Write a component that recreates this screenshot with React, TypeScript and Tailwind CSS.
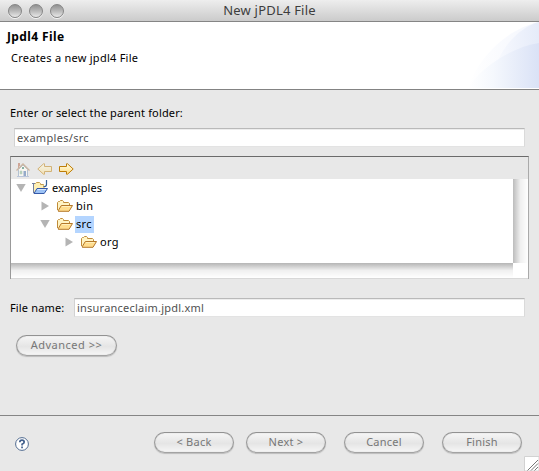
import type { ReactNode } from "react";

function TrafficLight() {
  return (
    <span className="size-[14px] rounded-full border border-[#858585] bg-linear-to-b from-[#929292] via-[#b9b9b9] to-[#e9e9e9] shadow-[0_1px_0_#f3f3f3]" />
  );
}

function HomeIcon() {
  return (
    <svg width="14" height="15" viewBox="0 0 14 15" opacity="0.7">
      <path d="M2.500 7.500 7 3l4.500 4.500v7h-9z" fill="#fffdf4" stroke="#9fb3c9" />
      <path d="M2.500 1v5M3.500 1v3" stroke="#c58a74" />
      <path d="M.5 8.500 7 2l6.500 6.500" fill="none" stroke="#c2a183" strokeWidth="1.300" />
      <path d="M1 14.500h12" stroke="#a7b9d6" />
      <path d="M6 5h2v2H6z" fill="#5d9a89" />
      <path d="M4 9h2v3H4z" fill="#a5cba0" stroke="#9bbdb9" strokeWidth=".5" />
      <path d="M7.500 9h2.500v5H7.500z" fill="#7390bd" />
    </svg>
  );
}

function ArrowIcon({ forward = false }: { forward?: boolean }) {
  return (
    <svg width="15" height="13" viewBox="0 0 15 13" className={forward ? "" : "-scale-x-100 opacity-50"}>
      <defs>
        <linearGradient id={forward ? "fwd" : "back"} x2="0" y2="1">
          <stop stopColor="#fffde8" />
          <stop offset="1" stopColor="#ffdc80" />
        </linearGradient>
      </defs>
      <path
        d="M.5 3.500h7V.8h1L14.200 6l-5.700 5.200h-1V8.500h-7z"
        fill={forward ? "url(#fwd)" : "url(#back)"}
        stroke="#bd7d08"
        strokeLinejoin="round"
      />
    </svg>
  );
}

function FolderIcon() {
  return (
    <svg width="16" height="12" viewBox="0 0 16 12">
      <path d="M.5 10V2.500l1-1h1l1-1h2l1 1v1h5l1 1V6" fill="#fff4c4" stroke="#c08b38" />
      <path d="M1 11 4.300 5.500h11.200L12 11.300H1.300z" fill="#ffdd8e" stroke="#b5782a" strokeLinejoin="round" />
      <path d="M5 6.500h8.500" stroke="#fff0bd" />
    </svg>
  );
}

function ProjectIcon() {
  return (
    <svg width="16" height="15" viewBox="0 0 16 15">
      <path d="M1.500 12.500V4.500l1-1h1l1-1h3l1 1v1h3l.5.5v4" fill="#fff0b4" stroke="#c39a4c" />
      <path d="M0 3.500h3M1.500 4v9" stroke="#747f9c" />
      <path d="M2 13.500 5 8.500h10.500l-3.300 5z" fill="#9cc2f5" stroke="#3559a8" strokeLinejoin="round" />
      <path d="M5.500 9.500h8.500" stroke="#d5e8ff" />
      <path d="M12 0h4v7h-4z" fill="#fff" opacity=".85" />
      <path d="M14.500 0v4.500q0 2-2 2h-1" fill="none" stroke="#386296" strokeWidth="1.200" />
    </svg>
  );
}

function Disclosure({ open = false }: { open?: boolean }) {
  return (
    <svg width="10" height="10" viewBox="0 0 10 10" className="shrink-0">
      <path d={open ? "M.3 1h9.400L5 9z" : "M1.500.5v9L9 5z"} fill="#b4b4b4" />
    </svg>
  );
}

function TreeRow({ inset, open, selected, children }: { inset: string; open?: boolean; selected?: boolean; children: ReactNode }) {
  return (
    <div className={`flex h-[18px] items-center ${inset}`}>
      <Disclosure open={open} />
      <span className="ml-[7px] flex w-[16px] shrink-0"><FolderIcon /></span>
      <span className={`ml-[2px] flex h-[17px] items-center pl-px tracking-[0.35px] ${selected ? "w-[19px] bg-[#b4d5ff]" : ""}`}>{children}</span>
    </div>
  );
}

function Field({ children, className }: { children: ReactNode; className: string }) {
  return (
    <div className={`flex h-[19px] items-center border border-t-[#b9b9b9] border-r-[#dadada] border-b-[#e3e3e3] border-l-[#d2d2d2] bg-white pl-[2px] text-[#505050] shadow-[inset_0_1px_0_#ededed] ${className}`}>
      {children}
    </div>
  );
}

function PillButton({ children, className }: { children: ReactNode; className: string }) {
  return (
    <button className={`flex h-[21px] items-center justify-center rounded-full border border-t-[#929292] border-r-[#989898] border-b-[#a3a3a3] border-l-[#989898] bg-linear-to-b from-[#f6f6f6] via-[#e5e5e5] via-55% to-[#f6f6f6] pb-px text-[#777] shadow-[0_1px_1px_#bcbcbc,inset_0_0_1px_#aaa] ${className}`}>
      {children}
    </button>
  );
}

export default function App() {
  return (
    <main className="flex h-[471px] w-[539px] flex-col overflow-hidden bg-[#e8e8e8] font-['Noto_Sans','Open_Sans',sans-serif] text-[11px] leading-[16px] whitespace-pre text-black">
      <header className="grid h-[22px] shrink-0 grid-cols-[1fr_auto_1fr] items-center border-b border-[#858585] bg-linear-to-b from-[#eeeeee] to-[#cbcbcb]">
        <div className="flex gap-[7px] pl-[8px]"><TrafficLight /><TrafficLight /><TrafficLight /></div>
        <h1 className="pb-px text-[13px] leading-[20px] tracking-[0.2px] text-[#3d3d3d]">New jPDL4 File</h1>
      </header>

      <section className="flex h-[68px] shrink-0 justify-between border-b border-[#838383] bg-white">
        <div className="pt-[6px]">
          <h2 className="pl-[7px] text-[12px] leading-[17px] font-bold tracking-[0.4px]">Jpdl4 File</h2>
          <p className="pt-[5px] pl-[11px] leading-[16px] tracking-[0.25px]">Creates a new jpdl4 File</p>
        </div>
        <svg width="74" height="67" viewBox="0 0 74 67">
          <defs>
            <linearGradient id="wash"><stop stopColor="#fff" /><stop offset="0.35" stopColor="#f5f8fd" /><stop offset="1" stopColor="#dae2f6" /></linearGradient>
            <linearGradient id="outer"><stop stopColor="#fff" /><stop offset="1" stopColor="#f3f6fd" /></linearGradient>
            <linearGradient id="inner"><stop stopColor="#f7f9fe" /><stop offset="1" stopColor="#e5ebf9" /></linearGradient>
          </defs>
          <path d="M3 66C12 37 41 7 74 0v66z" fill="url(#outer)" />
          <path d="M33 38C43 17 59 4 74 0v66H33z" fill="url(#inner)" />
          <path d="M3 66C14 47 46 25 74 21v45z" fill="url(#wash)" />
        </svg>
      </section>

      <section className="flex h-[326px] shrink-0 flex-col border-b border-[#858585] pt-[15px] pl-[10px]">
        <label className="leading-[16px] tracking-[0.15px]">Enter or select the parent folder:</label>
        <Field className="mt-[7px] ml-[4px] w-[511px] tracking-[0.3px]">examples/src</Field>

        <div className="mt-[9px] flex h-[123px] w-[519px] shrink-0 flex-col border-t border-r border-l border-t-[#6b6b6b] border-r-[#aaa] border-l-[#999]">
          <div className="flex h-[22px] shrink-0 items-center pt-[2px] pl-[5px]">
            <HomeIcon />
            <span className="ml-[7px] flex"><ArrowIcon /></span>
            <span className="ml-[7px] flex"><ArrowIcon forward /></span>
          </div>
          <div className="grid grow grid-cols-[1fr_15px] grid-rows-[84px_1fr]">
            <div className="bg-white">
              <div className="flex h-[18px] items-center pl-[5px]">
                <Disclosure open />
                <span className="ml-[6px] flex pb-[2px]"><ProjectIcon /></span>
                <span className="ml-[4px] tracking-[0.1px]">examples</span>
              </div>
              <TreeRow inset="pl-[29px]">bin</TreeRow>
              <TreeRow inset="pl-[29px]" open selected>src</TreeRow>
              <TreeRow inset="pl-[53px]">org</TreeRow>
            </div>
            <div className="bg-linear-to-r from-[#bcbcbc] via-[#f0f0f0] via-50% to-white" />
            <div className="border-b border-[#d8d8d8] bg-linear-to-b from-[#b5b5b5] via-[#f0f0f0] via-50% to-white" />
            <div className="border-b border-[#d8d8d8] bg-white" />
          </div>
        </div>

        <div className="mt-[19px] flex items-center">
          <label className="w-[64px] tracking-[0.15px]">File name:</label>
          <Field className="w-[451px] tracking-[0.22px]">insuranceclaim.jpdl.xml</Field>
        </div>
        <PillButton className="mt-[18px] ml-[6px] w-[101px] tracking-[0.5px]">Advanced &gt;&gt;</PillButton>
      </section>

      <footer className="flex grow items-start pl-[15px]">
        <svg width="14" height="14" viewBox="0 0 14 14" className="mt-[21px]">
          <circle cx="7" cy="7" r="6.400" fill="#fff" stroke="#526c91" />
          <path d="M4.800 5.200Q4.900 3.200 7 3.200t2.200 1.900Q9.200 6.400 7.100 7.200v1.300" fill="none" stroke="#415f8c" strokeWidth="1.700" />
          <path d="M6.200 9.600h1.700v1.600H6.200z" fill="#415f8c" />
        </svg>
        <div className="mt-[16px] ml-[125px] flex tracking-[0.25px]">
          <PillButton className="w-[80px]">&lt; Back</PillButton>
          <PillButton className="ml-[12px] w-[80px]">Next &gt;</PillButton>
          <PillButton className="ml-[18px] w-[80px]">Cancel</PillButton>
          <PillButton className="ml-[18px] w-[80px]">Finish</PillButton>
        </div>
        <svg width="15" height="15" viewBox="0 0 15 15" className="ml-auto self-end">
          <path d="M.5 15V.5H15V15z" fill="#fff" stroke="#d2d2d2" />
          <path d="M3.500 14.500 14 4M7 14.500l7-7M10.500 14.500l3.500-3.500" stroke="#777" />
        </svg>
      </footer>
    </main>
  );
}
